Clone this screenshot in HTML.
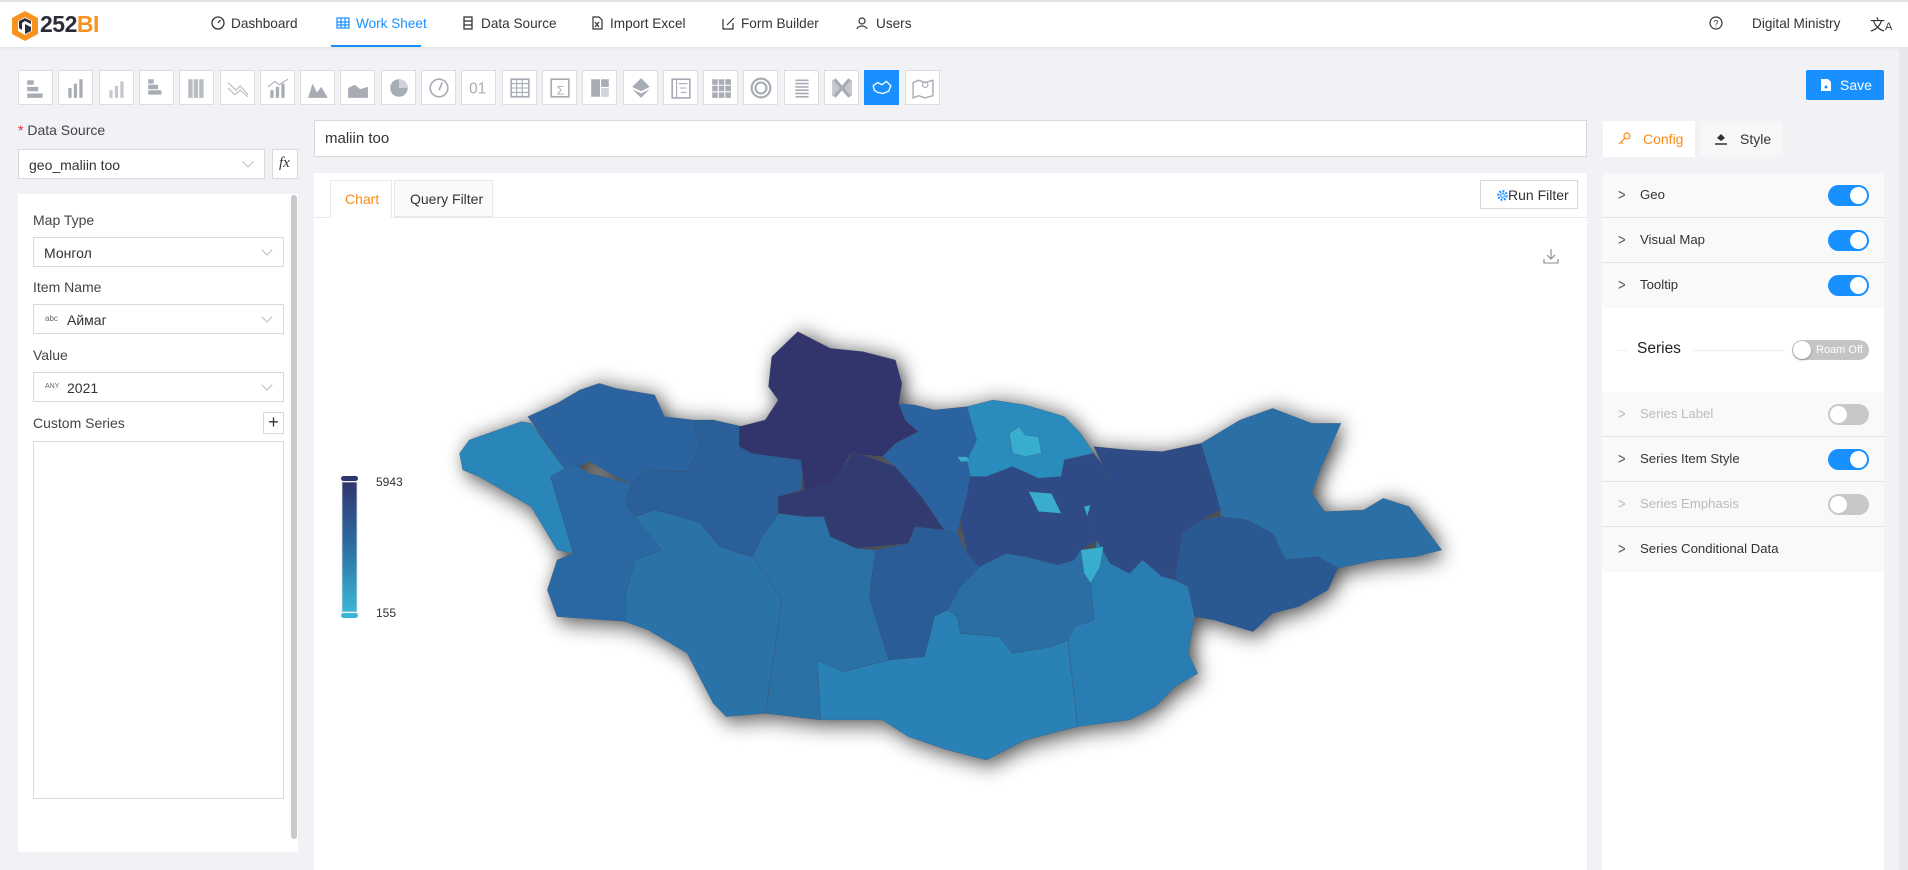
<!DOCTYPE html>
<html><head><meta charset="utf-8"><style>
*{box-sizing:border-box;margin:0;padding:0}
body{width:1908px;height:870px;overflow:hidden;background:#f0f2f5;font-family:"Liberation Sans",sans-serif;color:#333;position:relative;font-size:14px}
.a{position:absolute}
.hdr{left:0;top:0;width:1908px;height:47px;background:#fff;border-top:2px solid #e4e4e4;box-shadow:0 1px 4px rgba(0,0,0,.08)}
.nav{top:16px;font-size:13.6px;color:#333}
.nav svg{position:absolute;left:-20px;top:0}
.tb{top:70px;width:35px;height:35px;background:#fff;border:1px solid #ddd}
.tb svg{position:absolute;left:6px;top:6px}
.sel{background:#fff;border:1px solid #d9d9d9}
.chev{position:absolute;right:12px;top:8px;width:8px;height:8px;border-right:1px solid #bbb;border-bottom:1px solid #bbb;transform:rotate(45deg)}
.lbl{font-size:14px;color:#444}
.row{left:1602px;width:282px;height:45px;background:#f9f9f9;border-bottom:1px solid #e2e2e2}
.row .t{position:absolute;left:38px;top:14px;font-size:13.2px;color:#333}
.row .c{position:absolute;left:16px;top:14px;font-size:13px;color:#555;transform:scaleY(1.2)}
.tg{position:absolute;left:226px;top:12px;width:41px;height:21px;border-radius:11px;background:#1890ff}
.tg:after{content:"";position:absolute;right:2px;top:2px;width:17px;height:17px;border-radius:50%;background:#fff}
.tg.off{background:#c8c8c8}.tg.off:after{right:auto;left:2px}
.dis .t,.dis .c{color:#bbb}
</style></head><body>
<div class="a hdr"></div>
<svg class="a" style="left:10px;top:10px" width="30" height="32" viewBox="0 0 30 32"><path d="M15 1 L28 8 L28 24 L15 31 L2 24 L2 8Z" fill="#f7931e"/><path d="M15 7 L22 11 L22 21 L15 25 L8 21 L8 11Z" fill="#fff"/><path d="M9 11 L15 8 L21 11 L21 14 L15 11 L12 13 L12 20 L9 18Z" fill="#2b2b3a"/><path d="M15 14 L21 17 L21 21 L15 24Z" fill="#2b2b3a"/></svg>
<div class="a" style="left:40px;top:11px;font-size:23px;font-weight:bold;color:#2b2b3a;letter-spacing:-.5px">252<span style="color:#f7931e">BI</span></div>
<div class="a nav" style="left:231px"><svg width="14" height="14" viewBox="0 0 14 14"><circle cx="7" cy="7" r="6" fill="none" stroke="#333" stroke-width="1.3"/><path d="M7 7 L9.5 4" stroke="#333" stroke-width="1.3"/></svg>Dashboard</div>
<div class="a nav" style="left:356px;color:#1890ff"><svg width="14" height="14" viewBox="0 0 14 14" fill="none" stroke="#1890ff" stroke-width="1.2"><rect x="1" y="2" width="12" height="10"/><path d="M1 6H13M1 9H13M5 2V12M9 2V12"/></svg>Work Sheet</div>
<div class="a" style="left:331px;top:45px;width:90px;height:2px;background:#1890ff"></div>
<div class="a nav" style="left:481px"><svg width="14" height="14" viewBox="0 0 14 14" fill="none" stroke="#333" stroke-width="1.3"><rect x="3" y="1" width="8" height="12"/><path d="M3 5H11M3 9H11"/></svg>Data Source</div>
<div class="a nav" style="left:610px"><svg width="14" height="14" viewBox="0 0 14 14" fill="none" stroke="#333" stroke-width="1.2"><path d="M3 1H9L12 4V13H3Z"/><path d="M5 6L9 11M9 6L5 11"/></svg>Import Excel</div>
<div class="a nav" style="left:741px"><svg width="14" height="14" viewBox="0 0 14 14" fill="none" stroke="#333" stroke-width="1.2"><path d="M2 3V13H12V7"/><path d="M6 9L13 2"/></svg>Form Builder</div>
<div class="a nav" style="left:876px"><svg width="14" height="14" viewBox="0 0 14 14" fill="none" stroke="#333" stroke-width="1.2"><circle cx="6" cy="5" r="3"/><path d="M1 13C2 9 10 9 11 13"/></svg>Users</div>
<svg class="a" style="left:1709px;top:16px" width="14" height="14" viewBox="0 0 14 14"><circle cx="7" cy="7" r="6" fill="none" stroke="#333" stroke-width="1.2"/><text x="7" y="10.5" font-size="9" text-anchor="middle" fill="#333" font-family="Liberation Sans">?</text></svg>
<div class="a" style="left:1752px;top:16px;font-size:13.6px">Digital Ministry</div>
<div class="a" style="left:1870px;top:14px;font-size:15px;color:#333">文<span style="font-size:11px">A</span></div>

<div id="tbx"></div>
<div class="a" style="left:1806px;top:70px;width:78px;height:30px;background:#1890ff;border-radius:2px;color:#fff;font-size:14px;padding:7px 0 0 34px">Save<svg class="a" style="left:14px;top:8px" width="12" height="14" viewBox="0 0 12 14"><path d="M1 1H8L11 4V13H1Z" fill="#fff"/><circle cx="6" cy="9" r="1.5" fill="#1890ff"/></svg></div>

<div class="a lbl" style="left:18px;top:122px"><span style="color:#f5222d">* </span>Data Source</div>
<div class="a sel" style="left:18px;top:149px;width:247px;height:30px"><span class="a" style="left:10px;top:7px;font-size:14px">geo_maliin too</span><div class="chev"></div></div>
<div class="a sel" style="left:272px;top:149px;width:26px;height:30px;font-style:italic;font-family:'Liberation Serif',serif;font-size:15px;padding:5px 0 0 6px">fx</div>
<div class="a" style="left:18px;top:194px;width:280px;height:658px;background:#fff"></div>
<div class="a" style="left:291px;top:195px;width:6px;height:644px;background:#c9c9c9;border-radius:3px"></div>
<div class="a lbl" style="left:33px;top:212px">Map Type</div>
<div class="a sel" style="left:33px;top:237px;width:251px;height:30px"><span class="a" style="left:10px;top:7px">Монгол</span><div class="chev"></div></div>
<div class="a lbl" style="left:33px;top:279px">Item Name</div>
<div class="a sel" style="left:33px;top:304px;width:251px;height:30px"><span class="a" style="left:11px;top:9px;font-size:8px;color:#666">abc</span><span class="a" style="left:33px;top:7px">Аймаг</span><div class="chev"></div></div>
<div class="a lbl" style="left:33px;top:347px">Value</div>
<div class="a sel" style="left:33px;top:372px;width:251px;height:30px"><span class="a" style="left:11px;top:10px;font-size:7px;color:#666">ANY</span><span class="a" style="left:33px;top:7px">2021</span><div class="chev"></div></div>
<div class="a lbl" style="left:33px;top:415px">Custom Series</div>
<div class="a sel" style="left:263px;top:412px;width:21px;height:22px;text-align:center;font-size:18px;line-height:19px">+</div>
<div class="a sel" style="left:33px;top:441px;width:251px;height:358px"></div>

<div class="a sel" style="left:314px;top:120px;width:1273px;height:37px"><span class="a" style="left:10px;top:9px;font-size:15px">maliin too</span></div>
<div class="a" style="left:314px;top:173px;width:1273px;height:697px;background:#fff"></div>
<div class="a" style="left:314px;top:217px;width:1273px;height:1px;background:#e8e8e8"></div>
<div class="a" style="left:330px;top:180px;width:62px;height:38px;background:#fff;border:1px solid #e8e8e8;border-bottom:none;color:#fa8c16;font-size:14px;padding:10px 0 0 14px">Chart</div>
<div class="a" style="left:394px;top:180px;width:99px;height:37px;background:#fafafa;border:1px solid #e8e8e8;font-size:14px;padding:10px 0 0 15px">Query Filter</div>
<div class="a sel" style="left:1480px;top:180px;width:98px;height:29px;font-size:14px;padding:6px 0 0 14px"><svg class="a" style="left:15px;top:8px" width="13" height="13" viewBox="0 0 14 14"><circle cx="7" cy="7" r="4.5" fill="none" stroke="#1890ff" stroke-width="2.5" stroke-dasharray="2 1.5"/><circle cx="7" cy="7" r="2" fill="none" stroke="#1890ff"/></svg><span style="margin-left:13px">Run Filter</span></div>
<svg class="a" style="left:1543px;top:248px" width="16" height="16" viewBox="0 0 16 16" fill="none" stroke="#888" stroke-width="1.1"><path d="M8 1V11M4 7L8 11L12 7M1 11V15H15V11"/></svg>

<svg class="a" style="left:340px;top:476px" width="20" height="142" viewBox="0 0 20 142"><defs><linearGradient id="lg" x1="0" y1="0" x2="0" y2="1"><stop offset="0" stop-color="#30366d"/><stop offset=".5" stop-color="#2c6ea5"/><stop offset="1" stop-color="#3bb6d6"/></linearGradient></defs><rect x="1" y="0" width="17" height="5" rx="2.5" fill="#30366d"/><rect x="2" y="6" width="15" height="130" fill="url(#lg)" stroke="#ddd" stroke-width=".8"/><rect x="1" y="137" width="17" height="5" rx="2.5" fill="#3bb6d6"/></svg>
<div class="a" style="left:376px;top:475px;font-size:12px;color:#333">5943</div>
<div class="a" style="left:376px;top:606px;font-size:12px;color:#333">155</div>

<svg class="a" style="left:440px;top:320px;overflow:visible" width="1020" height="450" viewBox="0 0 1568 1350" preserveAspectRatio="none">
<defs><filter id="sh" filterUnits="userSpaceOnUse" x="-100" y="-100" width="1800" height="1600"><feGaussianBlur in="SourceAlpha" stdDeviation="14 34"/><feOffset dx="6" dy="10"/><feComponentTransfer><feFuncA type="linear" slope=".75"/></feComponentTransfer><feMerge><feMergeNode/><feMergeNode in="SourceGraphic"/></feMerge></filter></defs>
<g filter="url(#sh)" stroke="#3a4a66" stroke-width=".6" vector-effect="non-scaling-stroke">
<polygon fill="#2c86b8" points="30,400 45,360 125,305 140,310 195,455 170,470 205,700 180,690 140,560 60,470 35,450"/>
<polygon fill="#2b64a0" points="135,290 180,250 215,210 245,190 270,205 330,225 345,290 390,300 400,380 380,455 320,450 295,490 270,470 230,425 195,455"/>
<polygon fill="#2b68a3" points="170,470 205,430 230,460 295,490 285,550 305,600 340,690 300,720 285,820 290,905 180,890 165,810 180,720 205,700"/>
<polygon fill="#2b5f99" points="390,300 420,300 465,320 460,380 480,400 560,420 555,510 520,530 520,580 495,650 480,710 460,700 430,680 400,610 370,590 330,570 300,590 285,550 295,490 320,450 380,455 400,380"/>
<polygon fill="#30356c" points="460,320 500,300 520,240 505,200 510,110 550,35 600,85 650,95 700,120 710,190 705,250 715,300 735,335 700,370 680,410 630,400 620,440 600,490 560,510 555,420 480,400 460,380"/>
<polygon fill="#303a70" points="520,530 560,510 600,490 620,440 635,395 700,440 740,530 775,630 730,620 720,670 640,685 600,650 590,590 560,590 520,580"/>
<polygon fill="#2b73a8" points="300,590 330,570 370,590 400,610 430,680 460,700 480,710 500,760 525,840 520,920 500,1180 440,1190 420,1150 380,1000 320,930 285,905 285,820 300,720 340,690"/>
<polygon fill="#2b71a6" points="495,650 520,580 560,590 590,590 600,650 640,685 670,690 660,830 690,1020 620,1055 580,1020 585,1200 500,1180 520,920 525,840 500,760 480,710"/>
<polygon fill="#2b5d98" points="670,690 720,670 730,620 775,630 795,640 810,700 830,740 800,800 780,870 760,890 745,1010 690,1020 660,830"/>
<polygon fill="#2b64a0" points="705,250 730,255 760,270 810,260 825,360 810,420 815,470 810,530 800,600 795,640 775,630 740,530 700,440 680,410 700,370 735,335 715,300"/>
<polygon fill="#2c8bbd" points="810,260 850,240 900,255 960,290 985,340 1005,400 960,420 955,470 920,475 880,440 840,470 815,470 810,420 825,360"/>
<polygon fill="#2e4c87" points="815,470 840,470 880,440 920,475 955,470 960,420 1005,400 1020,440 1025,540 1000,580 1010,660 985,690 975,720 950,735 900,710 870,700 830,740 810,700 800,600 810,530"/>
<polygon fill="#2e4b85" points="1005,380 1060,390 1110,395 1170,370 1190,500 1200,570 1170,600 1140,640 1130,780 1110,770 1080,720 1060,760 1030,730 1010,660 1000,580 1025,540 1020,440"/>
<polygon fill="#2b6fa6" points="1170,370 1230,300 1280,265 1340,310 1385,310 1355,440 1340,520 1360,575 1420,570 1450,535 1490,560 1540,690 1500,710 1440,720 1380,745 1350,710 1300,720 1280,640 1240,600 1200,590 1200,570 1190,500"/>
<polygon fill="#2b5893" points="1140,640 1170,600 1200,590 1240,600 1280,640 1300,720 1350,710 1380,745 1365,810 1320,860 1280,880 1250,935 1190,900 1160,890 1150,800 1130,780"/>
<polygon fill="#2b6ea5" points="780,870 800,800 830,740 870,700 900,710 950,735 975,720 985,690 1000,780 1005,900 975,920 965,960 940,980 880,1000 860,950 800,940 795,890"/>
<polygon fill="#2b7db2" points="1000,780 1010,660 1030,730 1060,760 1080,720 1110,770 1130,780 1150,800 1160,890 1150,1000 1165,1060 1130,1100 1100,1160 1060,1200 980,1220 965,960 975,920 1005,900"/>
<polygon fill="#2c81b5" points="580,1020 620,1055 690,1020 745,1010 760,890 780,870 795,890 800,940 860,950 880,1000 940,980 965,960 980,1220 900,1260 840,1320 780,1290 720,1250 680,1200 585,1200"/>
<polygon fill="#38adce" points="875,340 890,320 900,345 920,350 925,400 900,410 880,400"/>
<polygon fill="#38adce" points="905,515 940,520 955,580 920,575"/>
<polygon fill="#38adce" points="985,690 1020,680 1015,740 1000,790 990,760"/>
<polygon fill="#38adce" points="795,410 810,410 815,425 800,425"/>
<polygon fill="#38adce" points="990,560 1000,555 995,590"/>
</g></svg>

<div class="a" style="left:1603px;top:121px;width:92px;height:36px;background:#fff;color:#fa8c16;font-size:14px;padding:10px 0 0 40px">Config<svg class="a" style="left:15px;top:11px" width="13" height="13" viewBox="0 0 13 13" fill="none" stroke="#fa8c16" stroke-width="1.2"><circle cx="9" cy="4" r="3"/><path d="M7 6L1 12M3 10L5 12"/></svg></div>
<div class="a" style="left:1700px;top:121px;width:83px;height:36px;background:#f7f7f7;font-size:14px;padding:10px 0 0 40px">Style<svg class="a" style="left:14px;top:11px" width="14" height="13" viewBox="0 0 14 13"><path d="M3 6L7 2L11 6L7 9Z" fill="#333"/><path d="M1 12H13" stroke="#333" stroke-width="1.5"/></svg></div>
<div class="a" style="left:1602px;top:173px;width:282px;height:697px;background:#fff"></div>
<div class="a row" style="top:173px"><span class="c">&gt;</span><span class="t">Geo</span><div class="tg"></div></div>
<div class="a row" style="top:218px"><span class="c">&gt;</span><span class="t">Visual Map</span><div class="tg"></div></div>
<div class="a row" style="top:263px;border-bottom:none"><span class="c">&gt;</span><span class="t">Tooltip</span><div class="tg"></div></div>
<div class="a" style="left:1617px;top:350px;width:10px;height:1px;background:#eee"></div>
<div class="a" style="left:1637px;top:340px;font-size:15.5px;color:#222">Series</div>
<div class="a" style="left:1692px;top:350px;width:92px;height:1px;background:#eee"></div>
<div class="a" style="left:1792px;top:340px;width:77px;height:20px;border-radius:10px;background:#c5c5c5;color:#fff;font-size:11px;padding:4px 0 0 24px">Roam Off<div class="a" style="left:1px;top:1px;width:18px;height:18px;border-radius:50%;background:#fff;box-shadow:0 1px 2px rgba(0,0,0,.3)"></div></div>
<div class="a row dis" style="top:392px"><span class="c">&gt;</span><span class="t">Series Label</span><div class="tg off"></div></div>
<div class="a row" style="top:437px"><span class="c">&gt;</span><span class="t">Series Item Style</span><div class="tg"></div></div>
<div class="a row dis" style="top:482px"><span class="c">&gt;</span><span class="t">Series Emphasis</span><div class="tg off"></div></div>
<div class="a row" style="top:527px;border-bottom:none"><span class="c">&gt;</span><span class="t">Series Conditional Data</span></div>
<div class="a" style="left:1899px;top:47px;width:9px;height:823px;background:#e8e8ec"></div>

<script>
var ic=['<path d="M2 3h6v4H2zM2 9h10v4H2zM2 15h14v4H2z" fill="#a8adb5"/>',
'<path d="M3 10h3v9H3zM8 6h3v13H8zM13 2h3v17h-3z" fill="#a8adb5"/>',
'<path d="M3 12h3v7H3zM8 8h3v11H8zM13 4h3v15h-3z" fill="#c4c8ce"/>',
'<path d="M2 2h5v4H2zM2 7h9v4H2zM2 12h12v4H2z" fill="#a8adb5"/>',
'<path d="M2 2h4v17H2zM7 2h4v17H7zM12 2h4v17h-4z" fill="#b8bcc3"/>',
'<path d="M1 5L8 12L12 8L19 16M1 10L7 16L12 12L19 18" fill="none" stroke="#b8bcc3"/>',
'<path d="M3 12h3v7H3zM8 9h3v10H8zM13 6h3v13h-3z" fill="#a8adb5"/><path d="M1 9L7 4L11 7L19 2" fill="none" stroke="#a8adb5"/>',
'<path d="M1 19L5 6L9 14L13 9L19 19Z" fill="#a8adb5"/>',
'<path d="M1 19V10L7 7L12 11L19 9V19Z" fill="#a8adb5"/>',
'<circle cx="10" cy="10" r="8" fill="#a8adb5"/><path d="M10 10V2A8 8 0 0 1 18 10Z" fill="#d0d3d8"/>',
'<circle cx="10" cy="10" r="8" fill="none" stroke="#a8adb5" stroke-width="1.5"/><path d="M10 12L13 5" stroke="#a8adb5" stroke-width="1.5"/>',
'<text x="1" y="15" font-size="14" fill="#a8adb5" font-family="Liberation Sans">01</text>',
'<rect x="2" y="2" width="16" height="16" fill="none" stroke="#a8adb5" stroke-width="1.5"/><path d="M2 6h16M2 10h16M2 14h16M7 2v16M12 2v16" stroke="#a8adb5"/>',
'<rect x="2" y="2" width="16" height="16" fill="none" stroke="#a8adb5" stroke-width="1.5"/><text x="7" y="16" font-size="11" fill="#a8adb5">Σ</text>',
'<path d="M2 2h8v16H2zM11 2h7v7h-7z" fill="#a8adb5"/><path d="M11 10h7v8h-7z" fill="#d0d3d8"/>',
'<path d="M10 1L18 9L10 13L2 9ZM2 11L10 15L18 11L10 19Z" fill="#a8adb5"/>',
'<rect x="2" y="2" width="16" height="17" fill="none" stroke="#a8adb5" stroke-width="1.5"/><path d="M6 2v17M8 6h8M9 10h6M10 14h5" stroke="#a8adb5"/>',
'<path d="M2 2h5v5H2zM8 2h5v5H8zM14 2h5v5h-5zM2 8h5v5H2zM8 8h5v5H8zM14 8h5v5h-5zM2 14h5v5H2zM8 14h5v5H8zM14 14h5v5h-5z" fill="#a8adb5"/>',
'<circle cx="10" cy="10" r="8.5" fill="none" stroke="#a8adb5" stroke-width="2"/><circle cx="10" cy="10" r="5" fill="none" stroke="#a8adb5" stroke-width="2"/>',
'<path d="M4 3h12M4 6h12M4 9h12M4 12h12M4 15h12M4 18h12" stroke="#a8adb5" stroke-width="1.5"/>',
'<path d="M1 2L8 10L1 18ZM19 2L12 10L19 18Z" fill="#c4c8ce"/><path d="M3 2L17 18M17 2L3 18" stroke="#a8adb5" stroke-width="3"/>',
'<path d="M2 8L6 5L10 7L14 4L18 8L16 13L11 15L6 14L3 12Z" fill="none" stroke="#fff" stroke-width="1.2"/>',
'<path d="M1 5L6 3L12 5L19 3V17L12 19L6 17L1 19Z" fill="none" stroke="#a8adb5" stroke-width="1.3"/><circle cx="12" cy="7" r="2.5" fill="none" stroke="#a8adb5"/>'];
var h='';for(var i=0;i<ic.length;i++){var act=i==21;h+='<div class="a tb" style="left:'+(18+i*40.3)+'px;'+(act?'background:#1890ff;border-color:#1890ff':'')+'"><svg width="22" height="22" viewBox="0 0 20 20">'+ic[i]+'</svg></div>';}
document.getElementById('tbx').innerHTML=h;
</script>
</body></html>
